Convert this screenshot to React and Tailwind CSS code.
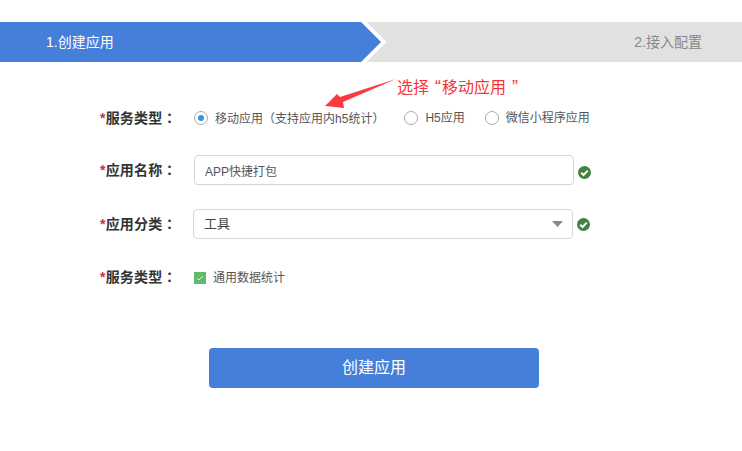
import React from 'react';

const font = "font-['Liberation_Sans','Noto_Sans_CJK_SC',sans-serif]";
// TC punctuation sits centred in its box, like the reference
const punct = "font-['Noto_Sans_CJK_TC',sans-serif]";

const FieldLabel = ({ children }) => (
  <div className="w-[94px] shrink-0 pb-[2px] text-sm font-bold text-[#333] whitespace-nowrap tracking-[0.2px]">
    <span className="text-[#c8304b]">*</span>
    {children}
    <span className={punct}>：</span>
  </div>
);

const Radio = ({ children, checked, className }) => (
  <label className={`flex items-center ${className}`}>
    <span className="w-[14px] h-[14px] rounded-full border border-[#aaa] flex items-center justify-center shrink-0">
      {checked && <span className="w-[6px] h-[6px] rounded-full bg-[#3a8ee6]" />}
    </span>
    <span className="ml-[7px] text-xs text-[#555] whitespace-nowrap">{children}</span>
  </label>
);

const ValidIcon = ({ className }) => (
  <svg className={`w-[13px] h-[13px] ml-1 shrink-0 ${className}`} viewBox="0 0 13 13">
    <circle cx="6.5" cy="6.5" r="6.5" fill="#44803f" />
    <path d="M3.2 6.8l2.3 2.2 4.3-4.4" fill="none" stroke="#fff" strokeWidth="2" />
  </svg>
);

const App = () => {
  return (
    <div className={`relative w-[742px] h-[451px] overflow-hidden bg-white pt-[22px] ${font}`}>
      {/* Steps */}
      <div className="relative h-10 bg-[#e1e1e1] flex items-center justify-between">
        <svg className="absolute left-0 top-0" width="392" height="40" viewBox="0 0 392 40">
          <polygon points="361,0 366.5,0 386.5,20 366.5,40 361,40 381,20" fill="#fff" />
          <polygon points="0,0 361,0 381,20 361,40 0,40" fill="#467fd9" />
        </svg>
        <span className="relative ml-[46px] text-sm text-white">1.创建应用</span>
        <span className="relative mr-10 text-sm text-[#888]">2.接入配置</span>
      </div>

      {/* Form */}
      <div className="pl-[100px]">
        <div className="flex items-center h-5 mt-[46px]">
          <FieldLabel>服务类型</FieldLabel>
          <Radio checked>
            移动应用<span className={punct}>（</span>支持应用内h5统计<span className={punct}>）</span>
          </Radio>
          <Radio className="ml-5">H5应用</Radio>
          <Radio className="ml-5">微信小程序应用</Radio>
        </div>

        <div className="flex items-center h-[30px] mt-[27px]">
          <FieldLabel>应用名称</FieldLabel>
          <input
            readOnly
            value="APP快捷打包"
            className={`w-[380px] h-[30px] px-[10px] border border-[#d5d5d5] rounded-sm text-xs text-[#555] outline-none ${font}`}
          />
          <ValidIcon className="mt-[4px]" />
        </div>

        <div className="flex items-center h-[30px] mt-6">
          <FieldLabel>应用分类</FieldLabel>
          <div className="-ml-px w-[380px] h-[30px] pl-[10px] pr-[9px] border border-[#d5d5d5] rounded-sm flex items-center justify-between text-[13px] text-[#444]">
            <span>工具</span>
            <svg width="11" height="6" viewBox="0 0 11 6"><polygon points="0,0 11,0 5.5,6" fill="#888" /></svg>
          </div>
          <ValidIcon />
        </div>

        <div className="flex items-center h-5 mt-[28px]">
          <FieldLabel>服务类型</FieldLabel>
          <span className="w-3 h-3 mt-[2px] bg-[#60bb6a] flex items-center justify-center shrink-0">
            <svg width="8" height="6" viewBox="0 0 8 6"><path d="M1 3l2 2 4-4" fill="none" stroke="#d9f2d9" strokeWidth="1" /></svg>
          </span>
          <span className="ml-[7px] mt-[2px] text-xs text-[#555] whitespace-nowrap">通用数据统计</span>
        </div>
      </div>

      <button className={`block ml-[209px] mt-[61px] w-[330px] h-10 rounded bg-[#467fd9] text-white text-base ${font}`}>
        创建应用
      </button>

      {/* Annotation */}
      <svg className="absolute left-[325px] top-[78px]" width="72" height="31" viewBox="0 0 72 31">
        <polygon points="71,1 18,24 19,30 0,28 12,16 15,19" fill="#fb3a3f" />
      </svg>
      <div className="absolute left-[397px] top-[73px] text-base leading-[22px] text-[#f5333a] whitespace-nowrap">
        选择<span className="ml-[6px] mr-px text-lg">“</span>移动应用<span className="ml-[6px] text-lg">”</span>
      </div>
    </div>
  );
};

export default App;
